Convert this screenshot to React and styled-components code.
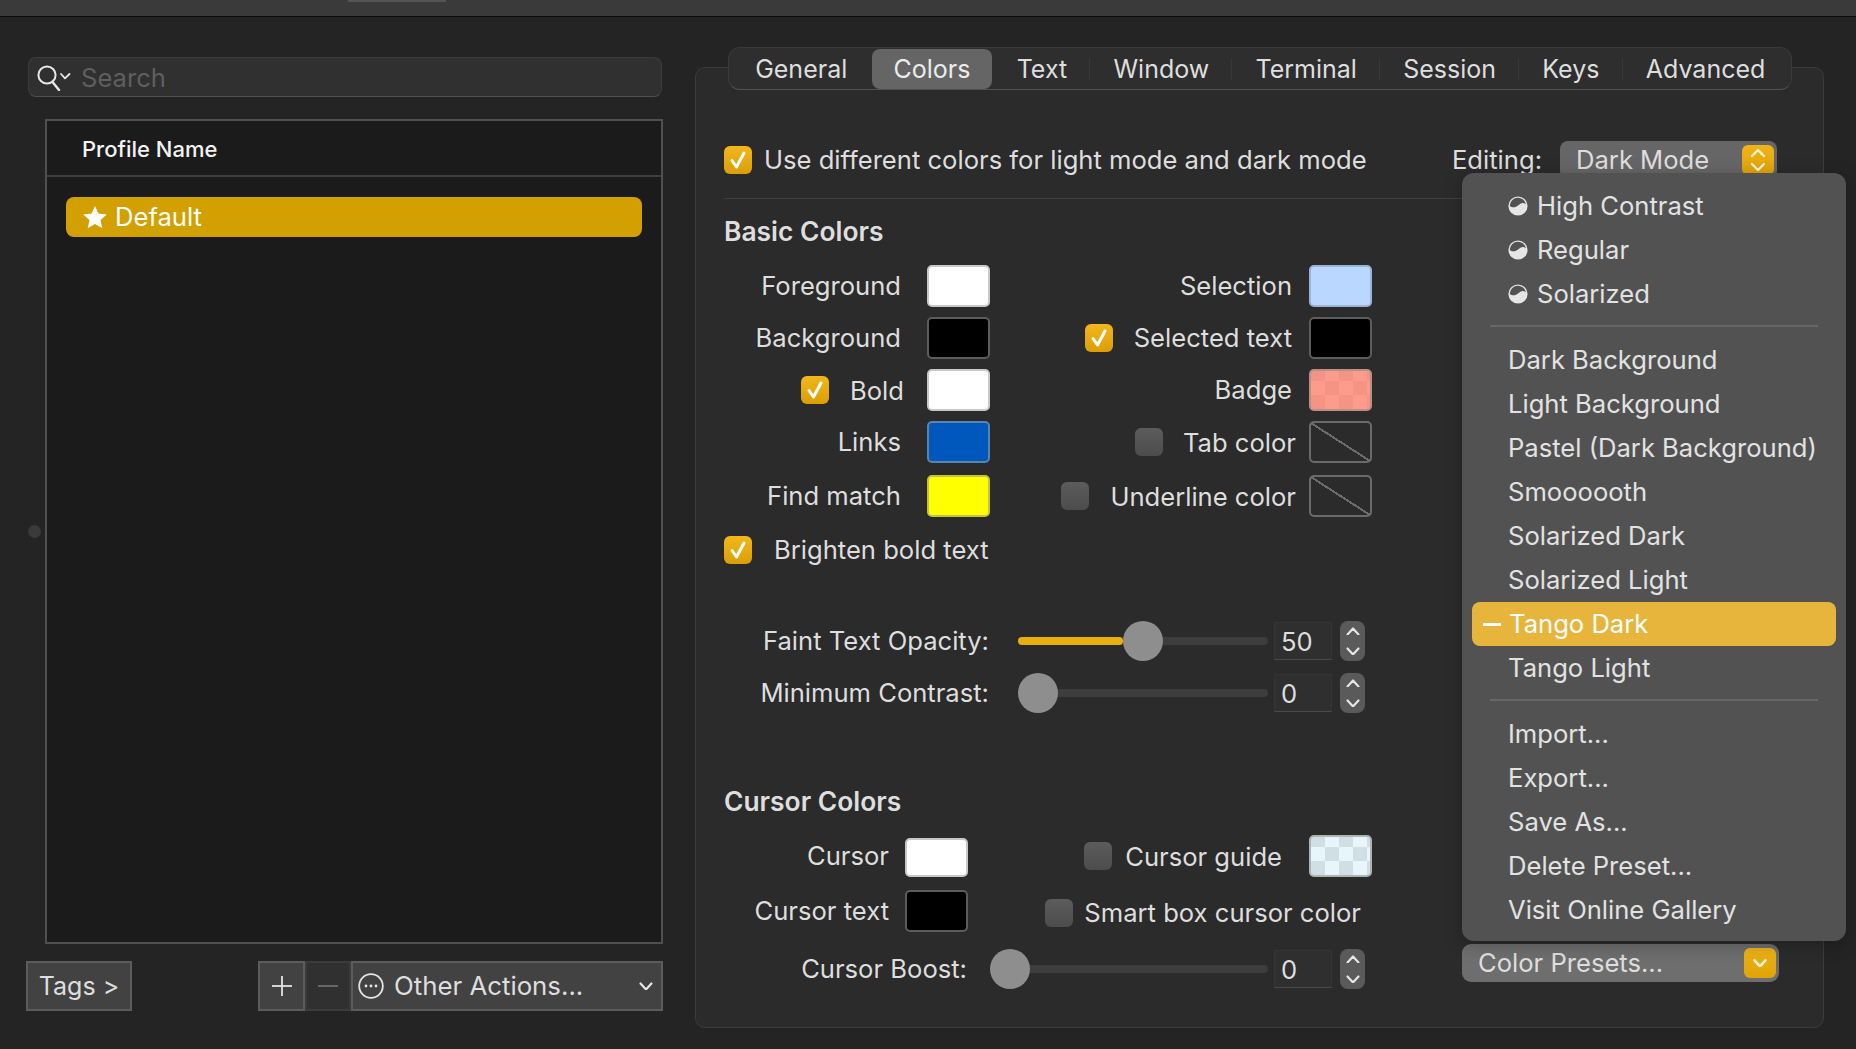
import React from 'react'
import { styled, createGlobalStyle } from 'styled-components'

const GlobalStyle = createGlobalStyle`
  html, body {
    margin: 0;
    padding: 0;
    background: #242424;
  }
  * {
    box-sizing: border-box;
  }
`;
const Page = styled.div`
  width: 1856px;
  height: 1049px;
  display: flex;
  flex-direction: column;
  overflow: hidden;
  background: #242424;
  color: #dedede;
  font-family: Inter, "Liberation Sans", sans-serif;
  font-size: 25.6px;
  line-height: 1.2;
`;
const TopBar = styled.div`
  flex: none;
  height: 17px;
  padding-left: 348px;
  background: #3a3a3a;
  border-bottom: 1px solid #0c0c0c;
`;
const TopBarTab = styled.div`
  width: 98px;
  height: 2px;
  background: #555;
`;
const Body = styled.div`
  flex: 1;
  display: flex;
  min-height: 0;
`;
const LeftColumn = styled.div`
  position: relative;
  flex: none;
  width: 636px;
  margin-left: 27px;
  padding-top: 40px;
  display: flex;
  flex-direction: column;
`;
const DragDot = styled.div`
  position: absolute;
  left: 1px;
  top: 508px;
  width: 13px;
  height: 13px;
  border-radius: 50%;
  background: #3a3a3a;
`;
const SearchBox = styled.div`
  height: 40px;
  margin: 0 1px;
  display: flex;
  align-items: center;
  gap: 9px;
  padding: 2px 0 0 7px;
  background: #303030;
  border: 1px solid #3c3c3c;
  border-bottom-color: #505050;
  border-radius: 8px;
  color: #5f5f5f;
`;
const ProfileTable = styled.div`
  height: 825px;
  margin: 22px 0 17px 18px;
  background: #1b1b1b;
  border: 2px solid #505050;
`;
const TableHeader = styled.div`
  height: 56px;
  padding: 2px 0 0 35px;
  display: flex;
  align-items: center;
  font-size: 22px;
  font-weight: 500;
  color: #f2f2f2;
  border-bottom: 2px solid #3e3e3e;
`;
const ProfileRow = styled.div`
  height: 40px;
  margin: 20px 19px 0;
  padding-left: 16px;
  display: flex;
  align-items: center;
  gap: 7px;
  background: #d2a000;
  border-radius: 8px;
  color: #fff;
`;
const BottomBar = styled.div`
  display: flex;
  justify-content: space-between;
  margin-left: -1px;
`;
const BarButton = styled.div`
  height: 50px;
  width: ${(p) => p.$width}px;
  display: flex;
  align-items: center;
  justify-content: center;
  font-size: 25px;
  background: ${(p) => (p.$disabled ? '#303030' : '#424242')};
  border: 2px solid ${(p) => (p.$disabled ? '#3c3c3c' : '#5c5c5c')};
`;
const ButtonGroup = styled.div`
  display: flex;
`;
const ActionsButton = styled(BarButton)`
  justify-content: flex-start;
  padding-left: 5px;
  gap: 10px;
  font-size: 25.8px;
`;
const ActionsChevron = styled.span`
  display: flex;
  margin-left: auto;
  margin-right: 8px;
`;
const RightColumn = styled.div`
  flex: none;
  width: 1129px;
  margin-left: 32px;
  padding-top: 30px;
  display: flex;
  flex-direction: column;
`;
const TabStrip = styled.div`
  position: relative;
  z-index: 1;
  align-self: flex-start;
  height: 43px;
  margin-left: 33px;
  padding: 0 3px 2px;
  display: flex;
  align-items: center;
  font-size: 25px;
  background: #2e2e2e;
  border: 1px solid #3a3a3a;
  border-bottom-color: #505050;
  border-radius: 12px;
`;
const Tab = styled.div`
  height: 40px;
  margin: 2px ${(p) => (p.$active ? 2 : 0)}px 0;
  padding: 0 ${(p) => (p.$active ? 21.15 : 23.15)}px;
  display: flex;
  align-items: center;
  border-radius: 8px;
  color: ${(p) => (p.$active ? '#ececec' : '#dedede')};
  background: ${(p) => (p.$active
    ? '#656565'
    : p.$divider
      ? 'linear-gradient(#383838, #383838) right center / 1px 22px no-repeat'
      : 'transparent')};
`;
const Panel = styled.div`
  position: relative;
  height: 961px;
  margin-top: -23px;
  padding: 73px 46px 0 28px;
  background: #2b2b2b;
  border: 1px solid #3c3c3c;
  border-radius: 10px;
`;
const EditingRow = styled.div`
  height: 38px;
  display: flex;
  align-items: center;
  justify-content: space-between;
`;
const CheckLabel = styled.div`
  height: 28px;
  display: flex;
  align-items: center;
  gap: ${(p) => p.$gap || 12}px;
`;
const CheckBoxMark = styled.span`
  flex: none;
  width: 28px;
  height: 28px;
  display: flex;
  align-items: center;
  justify-content: center;
  border-radius: 6px;
  background: ${(p) => (p.$on ? 'linear-gradient(#f2b71c, #d99f04)' : 'linear-gradient(#5c5c5c, #4c4c4c)')};
`;
const EditingGroup = styled.div`
  display: flex;
  align-items: center;
  gap: 18px;
`;
const ModeSelect = styled.div`
  width: 217px;
  height: 38px;
  padding: 0 3px 0 16px;
  display: flex;
  align-items: center;
  justify-content: space-between;
  background: #666;
  border-radius: 8px;
`;
const ArrowBox = styled.span`
  width: 32px;
  height: 30px;
  display: flex;
  align-items: center;
  justify-content: center;
  border-radius: 6px;
  background: linear-gradient(#f0b41a, #dfa308);
`;
const Separator = styled.div`
  height: 1px;
  margin-top: 19px;
  background: #3f3f3f;
`;
const SectionTitle = styled.div`
  height: 30px;
  margin-top: ${(p) => p.$top}px;
  display: flex;
  align-items: center;
  font-weight: 600;
  font-size: 26.4px;
`;
const BasicGrid = styled.div`
  width: 648px;
  margin-top: 18px;
  display: grid;
  grid-template-columns: 266px 382px;
  grid-template-rows: 42px 42px 42px 44px 42px;
  row-gap: 10px;
`;
const CursorGrid = styled.div`
  width: 648px;
  margin-top: 18px;
  display: grid;
  grid-template-columns: 244px 404px;
  grid-auto-rows: 42px;
  row-gap: 13px;
`;
const ColorCell = styled.div`
  height: 42px;
  display: flex;
  align-items: center;
  justify-content: flex-end;
  padding-right: ${(p) => p.$inset || 0}px;
  padding-top: ${(p) => p.$down || 0}px;
`;
const CellLabel = styled.span`
  margin-left: ${(p) => p.$before || 0}px;
  margin-right: ${(p) => p.$after}px;
  margin-top: ${(p) => (p.$drop ? 2 : 0)}px;
`;
const Swatch = styled.span`
  flex: none;
  width: 63px;
  height: ${(p) => (p.$short ? 39 : 42)}px;
  margin-top: ${(p) => (p.$short ? 3 : 0)}px;
  border-radius: 5px;
  border: 2px solid ${(p) => p.$edge};
  background: ${(p) => p.$fill};
`;
const BrightenRow = styled.div`
  margin-top: 18px;
  padding-top: 1px;
  height: 28px;
`;
const SliderRow = styled.div`
  width: 641px;
  height: 40px;
  margin-top: ${(p) => p.$top}px;
  display: flex;
  align-items: center;
`;
const SliderLabel = styled.span`
  flex: none;
  width: ${(p) => p.$width}px;
  padding-top: 1px;
  text-align: right;
  margin-right: ${(p) => p.$gap}px;
`;
const Track = styled.div`
  position: relative;
  flex: 1;
  height: 8px;
  border-radius: 4px;
  background: #3d3d3d;
`;
const TrackFill = styled.div`
  position: absolute;
  left: 0;
  top: 0;
  bottom: 0;
  border-radius: 4px;
  background: #e9ae0f;
`;
const Knob = styled.div`
  position: absolute;
  top: -16px;
  width: 40px;
  height: 40px;
  border-radius: 50%;
  background: #8e8e8e;
`;
const NumberField = styled.div`
  flex: none;
  width: 58px;
  height: 38px;
  margin-left: 6px;
  padding: 2px 0 0 6px;
  display: flex;
  align-items: center;
  background: #2f2f2f;
  border: 1px solid #343434;
  border-bottom-color: #4a4a4a;
`;
const Stepper = styled.div`
  flex: none;
  width: 25px;
  height: 40px;
  margin-left: 8px;
  display: flex;
  flex-direction: column;
  align-items: center;
  justify-content: space-around;
  border-radius: 8px;
  background: #5a5a5a;
`;
const LastRow = styled.div`
  display: flex;
  justify-content: space-between;
  align-items: flex-start;
  margin-right: -2px;
`;
const PresetButton = styled.div`
  width: 317px;
  height: 38px;
  margin-top: 12px;
  padding: 0 3px 0 16px;
  display: flex;
  align-items: center;
  justify-content: space-between;
  background: #6e6e6e;
  border-radius: 9px;
`;
const Menu = styled.div`
  position: absolute;
  left: 766px;
  top: 105px;
  z-index: 2;
  width: 384px;
  height: 768px;
  padding: 11px 10px 0;
  background: #525252;
  border-radius: 12px;
  box-shadow: 0 4px 18px rgba(0, 0, 0, 0.25);
`;
const MenuItem = styled.div`
  height: 44px;
  padding-left: 36px;
  display: flex;
  align-items: center;
  gap: 9px;
  border-radius: 8px;
  color: ${(p) => (p.$active ? '#fff' : '#e2e2e2')};
  background: ${(p) => (p.$active ? '#e8b53c' : 'transparent')};
`;
const MenuDash = styled.span`
  width: 18px;
  height: 3px;
  margin-left: -25px;
  margin-right: -1px;
  background: #fff;
`;
const MenuRule = styled.div`
  height: 22px;
  margin: 0 18px;
  padding-top: 9px;
  &::before {
    content: '';
    display: block;
    height: 2px;
    background: #676767;
  }
`;

const Check = () => (
  <svg width="18" height="20" viewBox="0 0 18 20" fill="none">
    <path d="M3 10.5 L7.5 17 L15 3" stroke="#fff" strokeWidth="3" strokeLinecap="round" strokeLinejoin="round" />
  </svg>
);
const CheckBox = ({ on }) => <CheckBoxMark $on={on}>{on && <Check />}</CheckBoxMark>;

const Chevron = ({ up, size = 14, color = '#e6e6e6', width = 2.2 }) => (
  <svg width={size} height={size * 0.64} viewBox="0 0 14 9" fill="none">
    <path d={up ? 'M1.5 7.5 L7 1.5 L12.5 7.5' : 'M1.5 1.5 L7 7.5 L12.5 1.5'} stroke={color} strokeWidth={width} strokeLinecap="round" strokeLinejoin="round" />
  </svg>
);
const SearchIcon = () => (
  <svg width="36" height="26" viewBox="0 0 36 26" fill="none" stroke="#e8e8e8" strokeLinecap="round">
    <circle cx="11" cy="10" r="8.6" strokeWidth="2" />
    <path d="M16.5 17 L23 25" strokeWidth="2.4" />
    <path d="M25 9 L29 13.4 L33.5 9" strokeWidth="1.8" strokeLinejoin="round" />
  </svg>
);
const Star = () => (
  <svg width="26" height="24" viewBox="0 0 26 24">
    <path d="M13 1 L16.4 8.6 L24.8 9.4 L18.5 15 L20.3 23.2 L13 19 L5.7 23.2 L7.5 15 L1.2 9.4 L9.6 8.6 Z" fill="#fff" />
  </svg>
);
const ContrastIcon = () => (
  <svg width="20" height="20" viewBox="0 0 20 20">
    <circle cx="10" cy="10" r="9.6" fill="#e6e6e6" />
    <path d="M1.8 10 A8.2 8.2 0 0 1 18 8.2 C15 5.8 12.4 7.2 10.4 9.2 C8 11.4 4 12 1.8 10 Z" fill="#525252" />
  </svg>
);
const MoreIcon = () => (
  <svg width="26" height="26" viewBox="0 0 26 26" fill="none">
    <circle cx="13" cy="13" r="11.8" stroke="#e4e4e4" strokeWidth="1.8" />
    <circle cx="8" cy="13" r="1.4" fill="#e4e4e4" />
    <circle cx="13" cy="13" r="1.4" fill="#e4e4e4" />
    <circle cx="18" cy="13" r="1.4" fill="#e4e4e4" />
  </svg>
);
const GlyphLine = ({ plus }) => (
  <svg width="24" height="24" viewBox="0 0 24 24" fill="none" stroke={plus ? '#e4e4e4' : '#6c6c6c'} strokeWidth="1.8">
    <path d="M2 12 H22" />
    {plus && <path d="M12 2 V22" />}
  </svg>
);
const UpDown = () => (
  <svg width="18" height="26" viewBox="0 0 18 26" fill="none" stroke="#fff3d0" strokeWidth="2.4" strokeLinecap="round" strokeLinejoin="round">
    <path d="M3 9 L9 3 L15 9" />
    <path d="M3 17 L9 23 L15 17" />
  </svg>
);

const noColor = `linear-gradient(to top right, transparent calc(50% - 1px), #6c6c6c calc(50% - 1px), #6c6c6c calc(50% + 1px), transparent calc(50% + 1px))`;
const checker = (light, dark) => `repeating-conic-gradient(${light} 0 25%, ${dark} 0 50%) 0 -4px / 28px 28px`;

const presets = [
  { name: 'High Contrast', icon: true },
  { name: 'Regular', icon: true },
  { name: 'Solarized', icon: true },
  { rule: true },
  { name: 'Dark Background' },
  { name: 'Light Background' },
  { name: 'Pastel (Dark Background)' },
  { name: 'Smoooooth' },
  { name: 'Solarized Dark' },
  { name: 'Solarized Light' },
  { name: 'Tango Dark', active: true },
  { name: 'Tango Light' },
  { rule: true },
  { name: 'Import...' },
  { name: 'Export...' },
  { name: 'Save As...' },
  { name: 'Delete Preset...' },
  { name: 'Visit Online Gallery' },
];
const tabs = ['General', 'Colors', 'Text', 'Window', 'Terminal', 'Session', 'Keys', 'Advanced'];

function Slider({ label, labelWidth, gap, value, top }) {
  return (
    <SliderRow $top={top}>
      <SliderLabel $width={labelWidth} $gap={gap}>{label}</SliderLabel>
      <Track>
        {value > 0 && <TrackFill style={{ width: `calc((100% - 40px) * ${value / 100})` }} />}
        <Knob style={{ left: `calc((100% - 40px) * ${value / 100})` }} />
      </Track>
      <NumberField>{value}</NumberField>
      <Stepper>
        <Chevron up />
        <Chevron />
      </Stepper>
    </SliderRow>
  );
}

export default function App() {
  return (
    <Page>
      <GlobalStyle />
      <TopBar>
        <TopBarTab />
      </TopBar>
      <Body>
        <LeftColumn>
          <DragDot />
          <SearchBox>
            <SearchIcon />
            <span>Search</span>
          </SearchBox>
          <ProfileTable>
            <TableHeader>Profile Name</TableHeader>
            <ProfileRow>
              <Star />
              Default
            </ProfileRow>
          </ProfileTable>
          <BottomBar>
            <BarButton $width={106}>Tags &gt;</BarButton>
            <ButtonGroup>
              <BarButton $width={47}><GlyphLine plus /></BarButton>
              <BarButton $width={46} $disabled><GlyphLine /></BarButton>
              <ActionsButton $width={312}>
                <MoreIcon />
                Other Actions...
                <ActionsChevron><Chevron /></ActionsChevron>
              </ActionsButton>
            </ButtonGroup>
          </BottomBar>
        </LeftColumn>
        <RightColumn>
          <TabStrip>
            {tabs.map((t) => (
              <Tab key={t} $active={t === 'Colors'} $divider={!['General', 'Colors', 'Advanced'].includes(t)}>{t}</Tab>
            ))}
          </TabStrip>
          <Panel>
            <EditingRow>
              <CheckLabel>
                <CheckBox on />
                Use different colors for light mode and dark mode
              </CheckLabel>
              <EditingGroup>
                Editing:
                <ModeSelect>
                  Dark Mode
                  <ArrowBox><UpDown /></ArrowBox>
                </ModeSelect>
              </EditingGroup>
            </EditingRow>
            <Separator />
            <SectionTitle $top={18}>Basic Colors</SectionTitle>
            <BasicGrid>
              <ColorCell><CellLabel $after={26}>Foreground</CellLabel><Swatch $fill="#fff" $edge="#c8c8c8" /></ColorCell>
              <ColorCell><CellLabel $after={17}>Selection</CellLabel><Swatch $fill="#b9d7ff" $edge="#9cb4d4" /></ColorCell>
              <ColorCell><CellLabel $after={26}>Background</CellLabel><Swatch $fill="#000" $edge="#5c5c5c" /></ColorCell>
              <ColorCell><CheckBox on /><CellLabel $before={21} $after={17}>Selected text</CellLabel><Swatch $fill="#000" $edge="#5c5c5c" /></ColorCell>
              <ColorCell><CheckBox on /><CellLabel $before={21} $after={23} $drop>Bold</CellLabel><Swatch $fill="#fff" $edge="#c8c8c8" /></ColorCell>
              <ColorCell><CellLabel $after={17}>Badge</CellLabel><Swatch $fill={checker('#fd9c8c', '#f59384')} $edge="#b98f87" /></ColorCell>
              <ColorCell><CellLabel $after={26}>Links</CellLabel><Swatch $fill="#0058bd" $edge="#5a83ad" /></ColorCell>
              <ColorCell><CheckBox /><CellLabel $before={20} $after={13} $drop>Tab color</CellLabel><Swatch $fill={noColor} $edge="#6a6a6a" /></ColorCell>
              <ColorCell><CellLabel $after={26}>Find match</CellLabel><Swatch $fill="#ffff00" $edge="#c4c43c" /></ColorCell>
              <ColorCell><CheckBox /><CellLabel $before={21} $after={13} $drop>Underline color</CellLabel><Swatch $fill={noColor} $edge="#6a6a6a" /></ColorCell>
            </BasicGrid>
            <BrightenRow>
              <CheckLabel $gap={22}>
                <CheckBox on />
                Brighten bold text
              </CheckLabel>
            </BrightenRow>
            <Slider label="Faint Text Opacity:" labelWidth={265} gap={29} value={50} top={58} />
            <Slider label="Minimum Contrast:" labelWidth={265} gap={29} value={0} top={12} />
            <SectionTitle $top={74}>Cursor Colors</SectionTitle>
            <CursorGrid>
              <ColorCell><CellLabel $after={16}>Cursor</CellLabel><Swatch $short $fill="#fff" $edge="#c8c8c8" /></ColorCell>
              <ColorCell><CheckBox /><CellLabel $before={13} $after={27} $drop>Cursor guide</CellLabel><Swatch $fill={checker('#e8f6fb', '#cfdfe3')} $edge="#aab5b8" /></ColorCell>
              <ColorCell><CellLabel $after={16}>Cursor text</CellLabel><Swatch $fill="#000" $edge="#5c5c5c" /></ColorCell>
              <ColorCell $inset={11} $down={4}><CheckBox /><CellLabel $before={11} $after={0}>Smart box cursor color</CellLabel></ColorCell>
            </CursorGrid>
            <LastRow>
              <Slider label="Cursor Boost:" labelWidth={243} gap={23} value={0} top={17} />
              <PresetButton>
                Color Presets...
                <ArrowBox><Chevron color="#fff3d0" width={2.6} /></ArrowBox>
              </PresetButton>
            </LastRow>
            <Menu>
              {presets.map((p, i) =>
                p.rule ? (
                  <MenuRule key={i} />
                ) : (
                  <MenuItem key={p.name} $active={p.active}>
                    {p.icon && <ContrastIcon />}
                    {p.active && <MenuDash />}
                    {p.name}
                  </MenuItem>
                )
              )}
            </Menu>
          </Panel>
        </RightColumn>
      </Body>
    </Page>
  )
}
